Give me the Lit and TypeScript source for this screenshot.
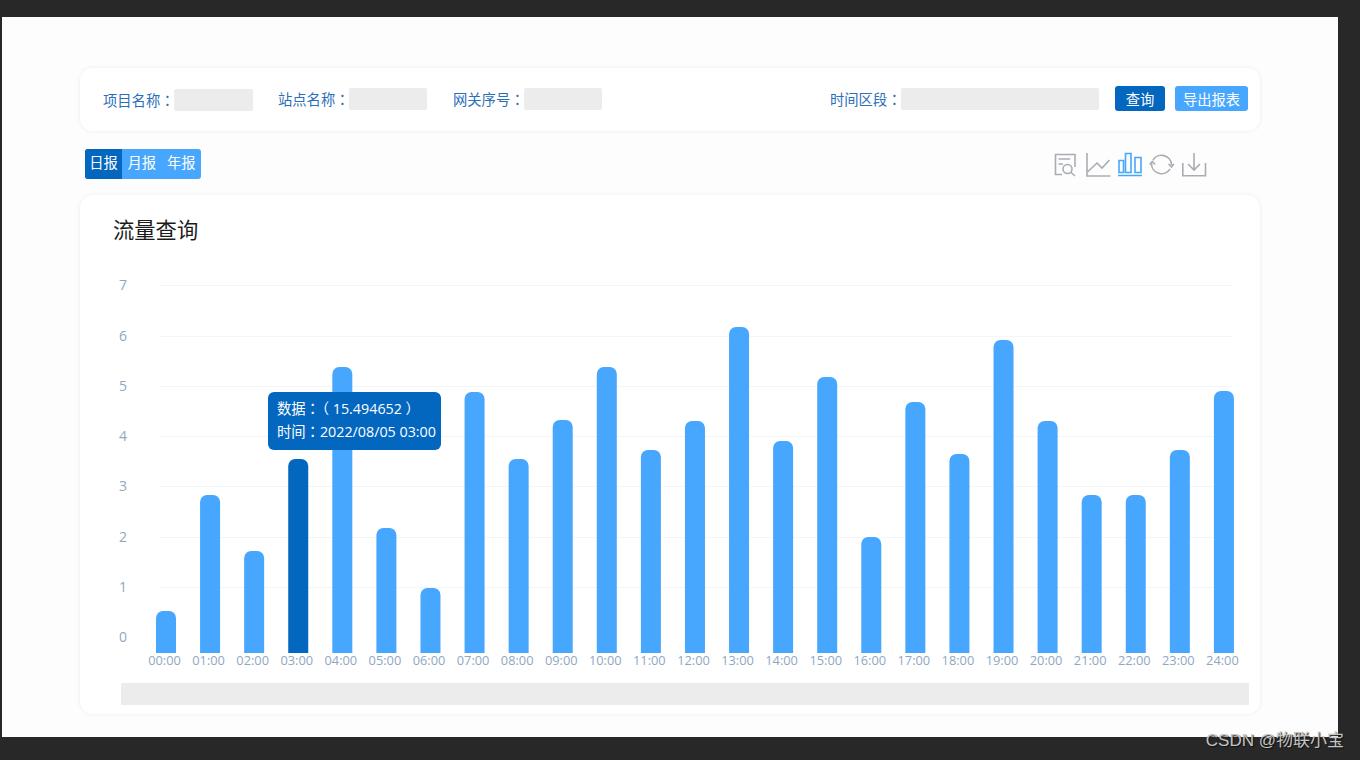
import { LitElement, html, css, svg } from "lit";
import { customElement } from "lit/decorators.js";

const tops = [611, 495, 551, 459, 367, 528, 588, 392, 459, 420, 367, 450, 421, 327, 441, 377, 537, 402, 454, 340, 421, 495, 495, 450, 391];
const grid: [string, number][] = [["7", 285], ["6", 336], ["5", 386], ["4", 436], ["3", 486], ["2", 537], ["1", 587]];
const ORIGIN_X = 80;
const ORIGIN_Y = 230;
const colon = html`<span class="colon">：</span>`;

@customElement("app-root")
export class AppRoot extends LitElement {
  static styles = css`
    :host {
      display: block;
      height: 760px;
      box-sizing: border-box;
      padding: 17px 22px 23px 2px;
      background: #282828;
      font-family: "Open Sans", "Noto Sans CJK SC", sans-serif;
      position: relative;
      overflow: hidden;
    }
    .frame {
      height: 720px;
      box-sizing: border-box;
      background: #fdfdfd;
      padding: 51px 78px 0;
      display: flex;
      flex-direction: column;
    }
    .card {
      background: #fff;
      border-radius: 13px;
      box-shadow: 0 0 4px rgba(0, 0, 0, 0.07);
    }
    .colon { font-family: "Noto Sans CJK TC", sans-serif; }
    .filters {
      height: 63px;
      box-sizing: border-box;
      display: flex;
      align-items: center;
      padding: 0 12px 1px 23px;
    }
    .field {
      display: flex;
      align-items: center;
      color: #2b6fb9;
      font-size: 14.3px;
      white-space: nowrap;
    }
    .field:first-child { margin-top: 2px; }
    .label { width: 71px; margin-top: -2px; }
    .field + .field { margin-left: 26px; }
    .input {
      width: 78px;
      height: 22px;
      background: #ececec;
      border-radius: 2px;
    }
    .field:first-child .input { width: 79px; }
    .field:first-child + .field { margin-left: 25px; }
    .field.time { margin-left: auto; }
    .time .input { width: 198px; }
    .btn {
      height: 25px;
      margin-top: -1px;
      border-radius: 3px;
      color: #fff;
      font-size: 14.3px;
      display: flex;
      align-items: center;
      justify-content: center;
    }
    .query { width: 50px; background: #0366bf; margin-left: 16px; }
    .export { width: 73px; background: #47a7fe; margin-left: 10px; }
    .tools {
      height: 64px;
      display: flex;
      align-items: center;
      justify-content: space-between;
      padding: 2px 53px 0 5px;
      box-sizing: border-box;
    }
    .tabs {
      display: flex;
      height: 30px;
      width: 116px;
      border-radius: 3px;
      overflow: hidden;
      background: #47a7fe;
      color: #fff;
      font-size: 14.3px;
      line-height: 28px;
    }
    .tab { width: 39.5px; text-align: center; }
    .tab.active { width: 37px; background: #0366bf; line-height: 27px; }
    .icons { display: flex; gap: 7px; }
    .icons svg { display: block; width: 25px; height: 26px; fill: none; stroke: #a9adb2; stroke-width: 1.6; overflow: visible; }
    .icons svg.on { stroke: #47a7fe; }
    .chart {
      height: 519px;
      position: relative;
      box-sizing: border-box;
      padding: 20px 11px 9px 41px;
      display: flex;
      flex-direction: column;
    }
    h2 {
      margin: 0 0 0 -8px;
      font-weight: 400;
      font-size: 21.3px;
      line-height: 30px;
      color: #1b1b1b;
      height: 15px;
    }
    .plot { flex: 1; position: relative; }
    .plot svg { position: absolute; left: -41px; top: 0; width: 1180px; height: 444px; }
    .plot text { font-family: "Open Sans", "Noto Sans CJK SC", sans-serif; fill: #8fa8c2; }
    .scroll { height: 22px; background: #ececec; }
    .tip {
      position: absolute;
      left: 147px;
      top: 162px;
      width: 173px;
      height: 58px;
      box-sizing: border-box;
      padding: 5px 0 0 9px;
      background: #0366bf;
      border-radius: 6px;
      color: #fff;
      font-size: 14.3px;
      line-height: 22px;
      white-space: nowrap;
    }
    .tip .num { margin-left: 2px; }
    .mark {
      position: absolute;
      right: 16px;
      bottom: 9px;
      color: #c4c4c4;
      font-size: 17px;
      font-family: "Liberation Sans", "Noto Sans CJK SC", sans-serif;
      text-shadow: 1px 1px 1px #111;
      white-space: nowrap;
    }
  `;

  render() {
    const bars = tops.map((top, i) => {
      const cx = 166 + i * 44.08 - ORIGIN_X;
      const y = top - ORIGIN_Y;
      const bottom = 653 - ORIGIN_Y;
      const d = `M${cx - 10} ${bottom}V${y + 7}a7 7 0 0 1 7 -7h6a7 7 0 0 1 7 7V${bottom}Z`;
      return svg`<path d=${d} fill=${i === 3 ? "#0366bf" : "#47a7fe"}></path>
        <text x=${cx - 1.5} y=${665 - ORIGIN_Y} text-anchor="middle" font-size="12.8">${String(i).padStart(2, "0")}:00</text>`;
    });
    return html`
      <div class="frame">
        <div class="card filters">
          <div class="field"><span class="label">项目名称${colon}</span><div class="input"></div></div>
          <div class="field"><span class="label">站点名称${colon}</span><div class="input"></div></div>
          <div class="field"><span class="label">网关序号${colon}</span><div class="input"></div></div>
          <div class="field time"><span class="label">时间区段${colon}</span><div class="input"></div></div>
          <div class="btn query">查询</div>
          <div class="btn export">导出报表</div>
        </div>
        <div class="tools">
          <div class="tabs">
            <div class="tab active">日报</div>
            <div class="tab">月报</div>
            <div class="tab">年报</div>
          </div>
          <div class="icons">
            <svg viewBox="0 0 25 26"><path d="M21 16V3.500H1.500V23.500H8M4.500 8H16M4.500 13H9"></path><circle cx="13.500" cy="18" r="4.500"></circle><path d="M17 21.500L21 25"></path></svg>
            <svg viewBox="0 0 25 26"><path d="M1 2V25H24.500M1.500 21L11 12L16 17L23.500 9"></path></svg>
            <svg class="on" viewBox="0 0 25 26"><path d="M1 9.500H5.500V21.500H1ZM7.500 2.500H13V21.500H7.500ZM17 6.500H23V21.500H17ZM0 24.500H24"></path></svg>
            <svg viewBox="0 0 25 26"><path d="M3 9A10 10 0 0 1 21.500 14M18.500 13L21.500 16L23.800 13"></path><path d="M20 18A10 10 0 0 1 1.500 12.500M-0.300 13.500L2.300 10.500L5 13.500"></path></svg>
            <svg viewBox="0 0 25 26"><path d="M0.800 12V24.800H23.500V12M12 2V19M6 13L12 19L18 13"></path></svg>
          </div>
        </div>
        <div class="card chart">
          <h2>流量查询</h2>
          <div class="plot">
            <svg viewBox="0 0 1180 444">
              ${grid.map(([label, y]) => svg`
                <line x1="80" x2="1153" y1=${y - ORIGIN_Y + 0.5} y2=${y - ORIGIN_Y + 0.5} stroke="#f3f6f8"></line>
                <text x="47" y=${y - ORIGIN_Y + 5} text-anchor="end" font-size="14">${label}</text>`)}
              <text x="47" y=${642 - ORIGIN_Y} text-anchor="end" font-size="14">0</text>
              ${bars}
            </svg>
            <div class="tip">数据${colon}<span class="num">（ 15.494652 ）</span><br />时间${colon}2022/08/05 03:00</div>
          </div>
          <div class="scroll"></div>
        </div>
      </div>
      <div class="mark">CSDN @物联小宝</div>
    `;
  }
}
